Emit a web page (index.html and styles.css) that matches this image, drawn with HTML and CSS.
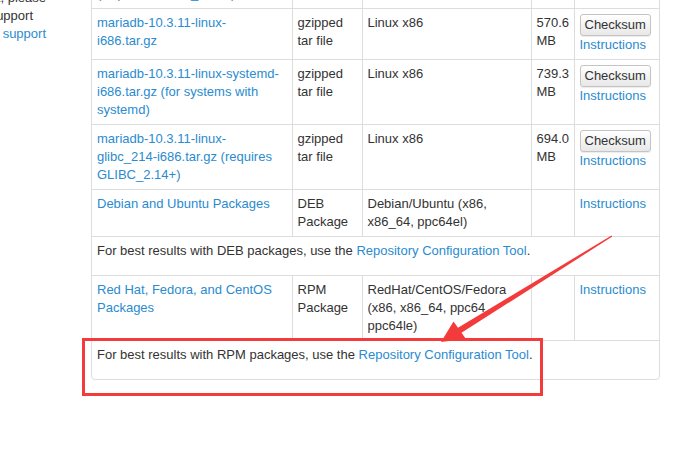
FILE: index.html
```html
<!DOCTYPE html>
<html>
<head>
<meta charset="utf-8">
<link rel="stylesheet" href="styles.css">
</head>
<body>
<div class="page">
  <aside class="sidebar">
    <div class="side-line">Commercial support, please</div>
    <div class="side-line side-mid">Community support</div>
    <div class="side-line"><a href="#">Enterprise support</a></div>
  </aside>
  <main class="main">
    <div class="panel">
      <table class="files">
        <colgroup>
          <col class="c-name"><col class="c-type"><col class="c-os"><col class="c-size"><col class="c-act">
        </colgroup>
        <tr>
          <td><a href="#">mariadb-10.3.11-linux-glibc_214-x86_64.tar.gz (requires GLIBC_2.14+)</a></td>
          <td>gzipped tar file</td>
          <td>Linux x86_64</td>
          <td>695.2 MB</td>
          <td><button class="btn">Checksum</button><br><a href="#">Instructions</a></td>
        </tr>
        <tr>
          <td><a href="#">mariadb-10.3.11-linux-i686.tar.gz</a></td>
          <td>gzipped tar file</td>
          <td>Linux x86</td>
          <td>570.6 MB</td>
          <td><button class="btn">Checksum</button><br><a href="#">Instructions</a></td>
        </tr>
        <tr>
          <td><a href="#">mariadb-10.3.11-linux-systemd-i686.tar.gz (for systems with systemd)</a></td>
          <td>gzipped tar file</td>
          <td>Linux x86</td>
          <td>739.3 MB</td>
          <td><button class="btn">Checksum</button><br><a href="#">Instructions</a></td>
        </tr>
        <tr>
          <td><a href="#">mariadb-10.3.11-linux-glibc_214-i686.tar.gz (requires GLIBC_2.14+)</a></td>
          <td>gzipped tar file</td>
          <td>Linux x86</td>
          <td>694.0 MB</td>
          <td><button class="btn">Checksum</button><br><a href="#">Instructions</a></td>
        </tr>
        <tr>
          <td><a href="#">Debian and Ubuntu Packages</a></td>
          <td>DEB Package</td>
          <td>Debian/Ubuntu (x86, x86_64, ppc64el)</td>
          <td></td>
          <td><a href="#">Instructions</a></td>
        </tr>
        <tr>
          <td colspan="5"><p class="note">For best results with DEB packages, use the <a href="#">Repository Configuration Tool</a>.</p></td>
        </tr>
        <tr>
          <td><a href="#">Red Hat, Fedora, and CentOS Packages</a></td>
          <td>RPM Package</td>
          <td>RedHat/CentOS/Fedora (x86, x86_64, ppc64 ppc64le)</td>
          <td></td>
          <td><a href="#">Instructions</a></td>
        </tr>
        <tr class="last">
          <td colspan="5"><p class="note">For best results with RPM packages, use the <a href="#">Repository Configuration Tool</a>.</p></td>
        </tr>
      </table>
    </div>
  </main>
</div>
<svg class="annot" width="677" height="451" viewBox="0 0 677 451" xmlns="http://www.w3.org/2000/svg">
  <rect x="83.5" y="339.5" width="458" height="55" fill="none" stroke="#f43b3b" stroke-width="3"/>
  <polygon fill="#f43b3b" points="611.5,235.5 612.3,236.6 461.5,332.8 466,339 441,342 453.5,321.5 458,327.8"/>
</svg>
</body>
</html>
```

FILE: styles.css
```css
html, body {
  margin: 0;
  padding: 0;
  background: #fff;
}
body {
  width: 677px;
  height: 451px;
  overflow: hidden;
  position: relative;
  font-family: "Liberation Sans", Arial, sans-serif;
  font-size: 13px;
  line-height: 18px;
  color: #333;
}
a {
  color: #2a8bd0;
  text-decoration: none;
}
.page {
  display: flex;
  align-items: flex-start;
}
.sidebar {
  width: 91px;
  flex: none;
  margin-top: -11px;
  overflow: hidden;
}
.side-line {
  white-space: nowrap;
  display: flex;
  justify-content: flex-end;
  margin-right: 45px;
}
.side-line.side-mid {
  margin-right: 58px;
}
.main {
  width: 569px;
  flex: none;
  margin-top: -57px;
}
.panel {
  border: 1px solid #ddd;
  border-radius: 4px;
  overflow: hidden;
}
.files {
  width: 100%;
  border-collapse: collapse;
  table-layout: fixed;
}
.c-name { width: 200px; }
.c-type { width: 70px; }
.c-os { width: 169px; }
.c-size { width: 43px; }
.c-act { width: 85px; }
.files td {
  border: 1px solid #ddd;
  padding: 5px 5px;
  vertical-align: top;
  text-align: left;
}
.files td:first-child { padding-right: 9px; }
.files td[colspan] { padding-right: 5px; }
.files tr:first-child td { border-top: 0; }
.files tr.last td { border-bottom: 0; }
.files td:first-child { border-left: 0; }
.files td:last-child { border-right: 0; }
.note {
  margin: 0 0 10px;
}
.btn {
  font-family: "Liberation Sans", Arial, sans-serif;
  font-size: 13px;
  line-height: 18px;
  height: 22px;
  padding: 1px 4px;
  color: #333;
  background: linear-gradient(#ffffff, #e8e8e8);
  border: 1px solid #c4c4c4;
  border-radius: 3px;
  box-shadow: 0 1px 1px rgba(0,0,0,0.08);
  vertical-align: top;
}
.annot {
  position: absolute;
  left: 0;
  top: 0;
  pointer-events: none;
}
```
